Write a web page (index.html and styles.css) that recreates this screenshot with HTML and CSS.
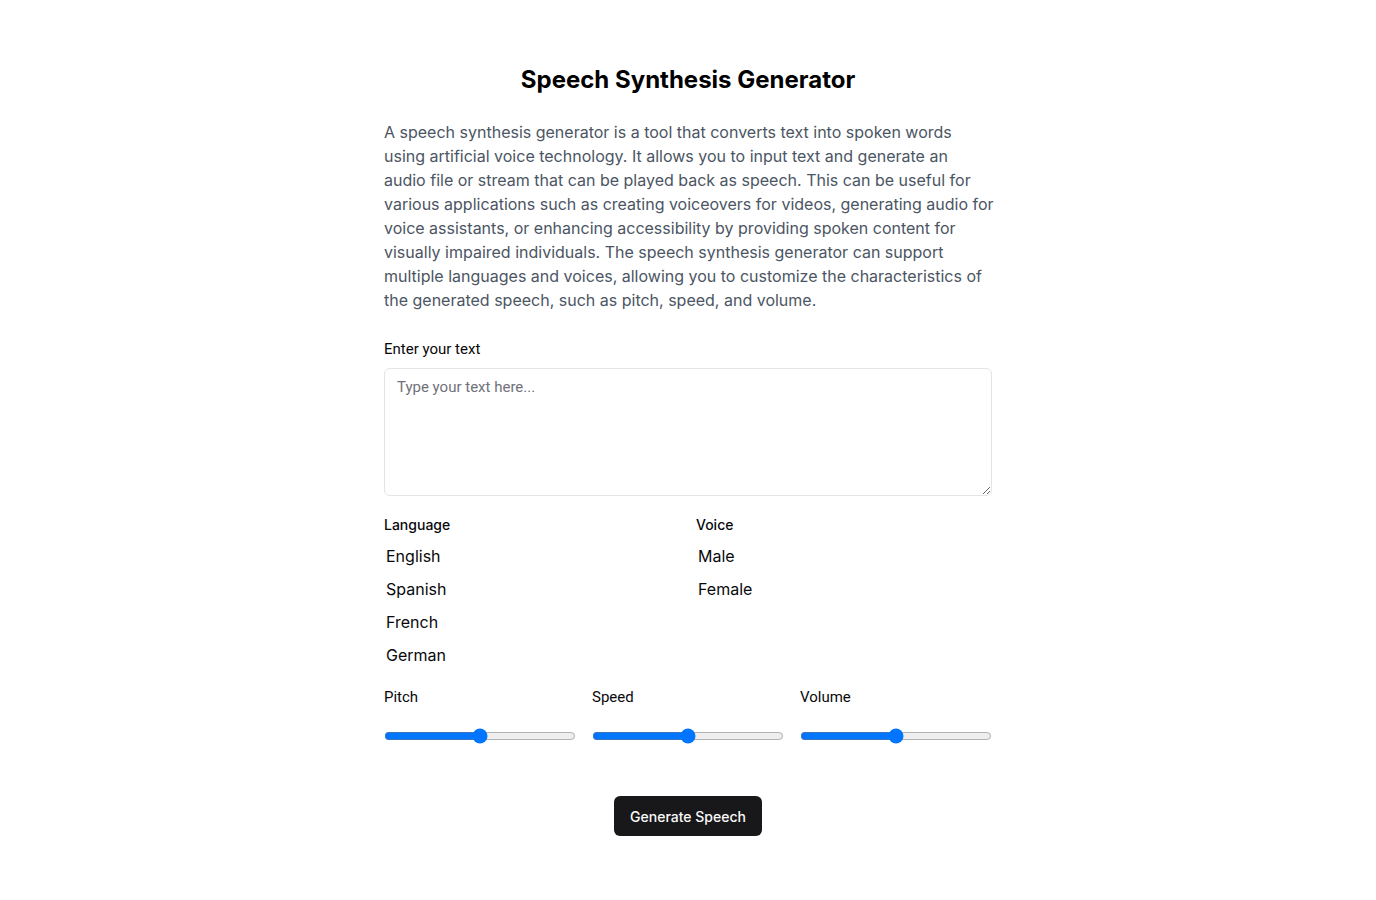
FILE: index.html
```html
<!DOCTYPE html>
<html lang="en">
<head>
<meta charset="utf-8">
<title>Speech Synthesis Generator</title>
<link rel="stylesheet" href="styles.css">
</head>
<body>
<main class="page">
  <h1 class="title">Speech Synthesis Generator</h1>
  <p class="intro">A speech synthesis generator is a tool that converts text into spoken words using artificial voice technology. It allows you to input text and generate an audio&nbsp;file or stream that can be played back as speech. This can be useful for various applications such as creating voiceovers for videos, generating audio for voice assistants, or enhancing accessibility by providing spoken content for visually impaired individuals. The speech synthesis generator can support multiple languages and voices, allowing you to customize the characteristics of the generated speech, such as pitch, speed, and volume.</p>

  <label class="label roboto" for="text">Enter your text</label>
  <textarea id="text" class="textarea" placeholder="Type your text here..."></textarea>

  <div class="two-col">
    <div class="field">
      <div class="label">Language</div>
      <ul class="options">
        <li>English</li>
        <li>Spanish</li>
        <li>French</li>
        <li>German</li>
      </ul>
    </div>
    <div class="field">
      <div class="label">Voice</div>
      <ul class="options">
        <li>Male</li>
        <li>Female</li>
      </ul>
    </div>
  </div>

  <div class="three-col">
    <div class="field">
      <label class="label roboto" for="pitch">Pitch</label>
      <input id="pitch" class="range" type="range" min="0" max="100" value="50">
    </div>
    <div class="field">
      <label class="label roboto" for="speed">Speed</label>
      <input id="speed" class="range" type="range" min="0" max="100" value="50">
    </div>
    <div class="field">
      <label class="label roboto" for="volume">Volume</label>
      <input id="volume" class="range" type="range" min="0" max="100" value="50">
    </div>
  </div>

  <div class="actions">
    <button class="btn" type="button">Generate Speech</button>
  </div>
</main>
</body>
</html>
```

FILE: styles.css
```css
* { box-sizing: border-box; }
html, body { margin: 0; padding: 0; background: #ffffff; }
body { font-family: Inter, "Noto Sans", sans-serif; color: #09090b; }

.page {
  max-width: 640px;
  margin: 0 auto;
  padding: 64px 16px 40px;
  display: flex;
  flex-direction: column;
}

.title {
  margin: 0 0 24px;
  font-size: 24px;
  line-height: 32px;
  font-weight: 700;
  text-align: center;
  color: #000;
}

.intro {
  margin: 0 -3px 27px 0;
  font-size: 16px;
  line-height: 24px;
  color: #4b5563;
}

.label {
  display: block;
  font-size: 14px;
  line-height: 20px;
  font-weight: 500;
  color: #09090b;
}
.roboto {
  font-family: Roboto, Inter, sans-serif;
  font-size: 15px;
  font-weight: 400;
}

.textarea {
  margin-top: 9px;
  width: 100%;
  height: 128px;
  padding: 8px 12px;
  border: 1px solid #e4e4e7;
  border-radius: 6px;
  font-family: Roboto, Inter, sans-serif;
  font-size: 15px;
  line-height: 20px;
  color: #09090b;
  resize: vertical;
  outline: none;
}
.textarea::placeholder { color: #71717a; }

.two-col {
  margin-top: 19px;
  display: grid;
  grid-template-columns: 1fr 1fr;
  gap: 16px;
}

.options {
  list-style: none;
  margin: 5px 0 0;
  padding: 0 2px;
  font-size: 16px;
  line-height: 33px;
  color: #09090b;
}

.three-col {
  margin-top: 15px;
  display: grid;
  grid-template-columns: 1fr 1fr 1fr;
  gap: 16px;
}

.range {
  display: block;
  width: 100%;
  margin: 21px 0 0;
  accent-color: #0075ff;
}

.actions {
  margin-top: 52px;
  display: flex;
  justify-content: center;
}

.btn {
  height: 40px;
  padding: 0 16px;
  border: none;
  border-radius: 6px;
  background: #18181b;
  color: #fafafa;
  font-family: Inter, sans-serif;
  font-size: 14px;
  font-weight: 500;
  cursor: pointer;
}
```
